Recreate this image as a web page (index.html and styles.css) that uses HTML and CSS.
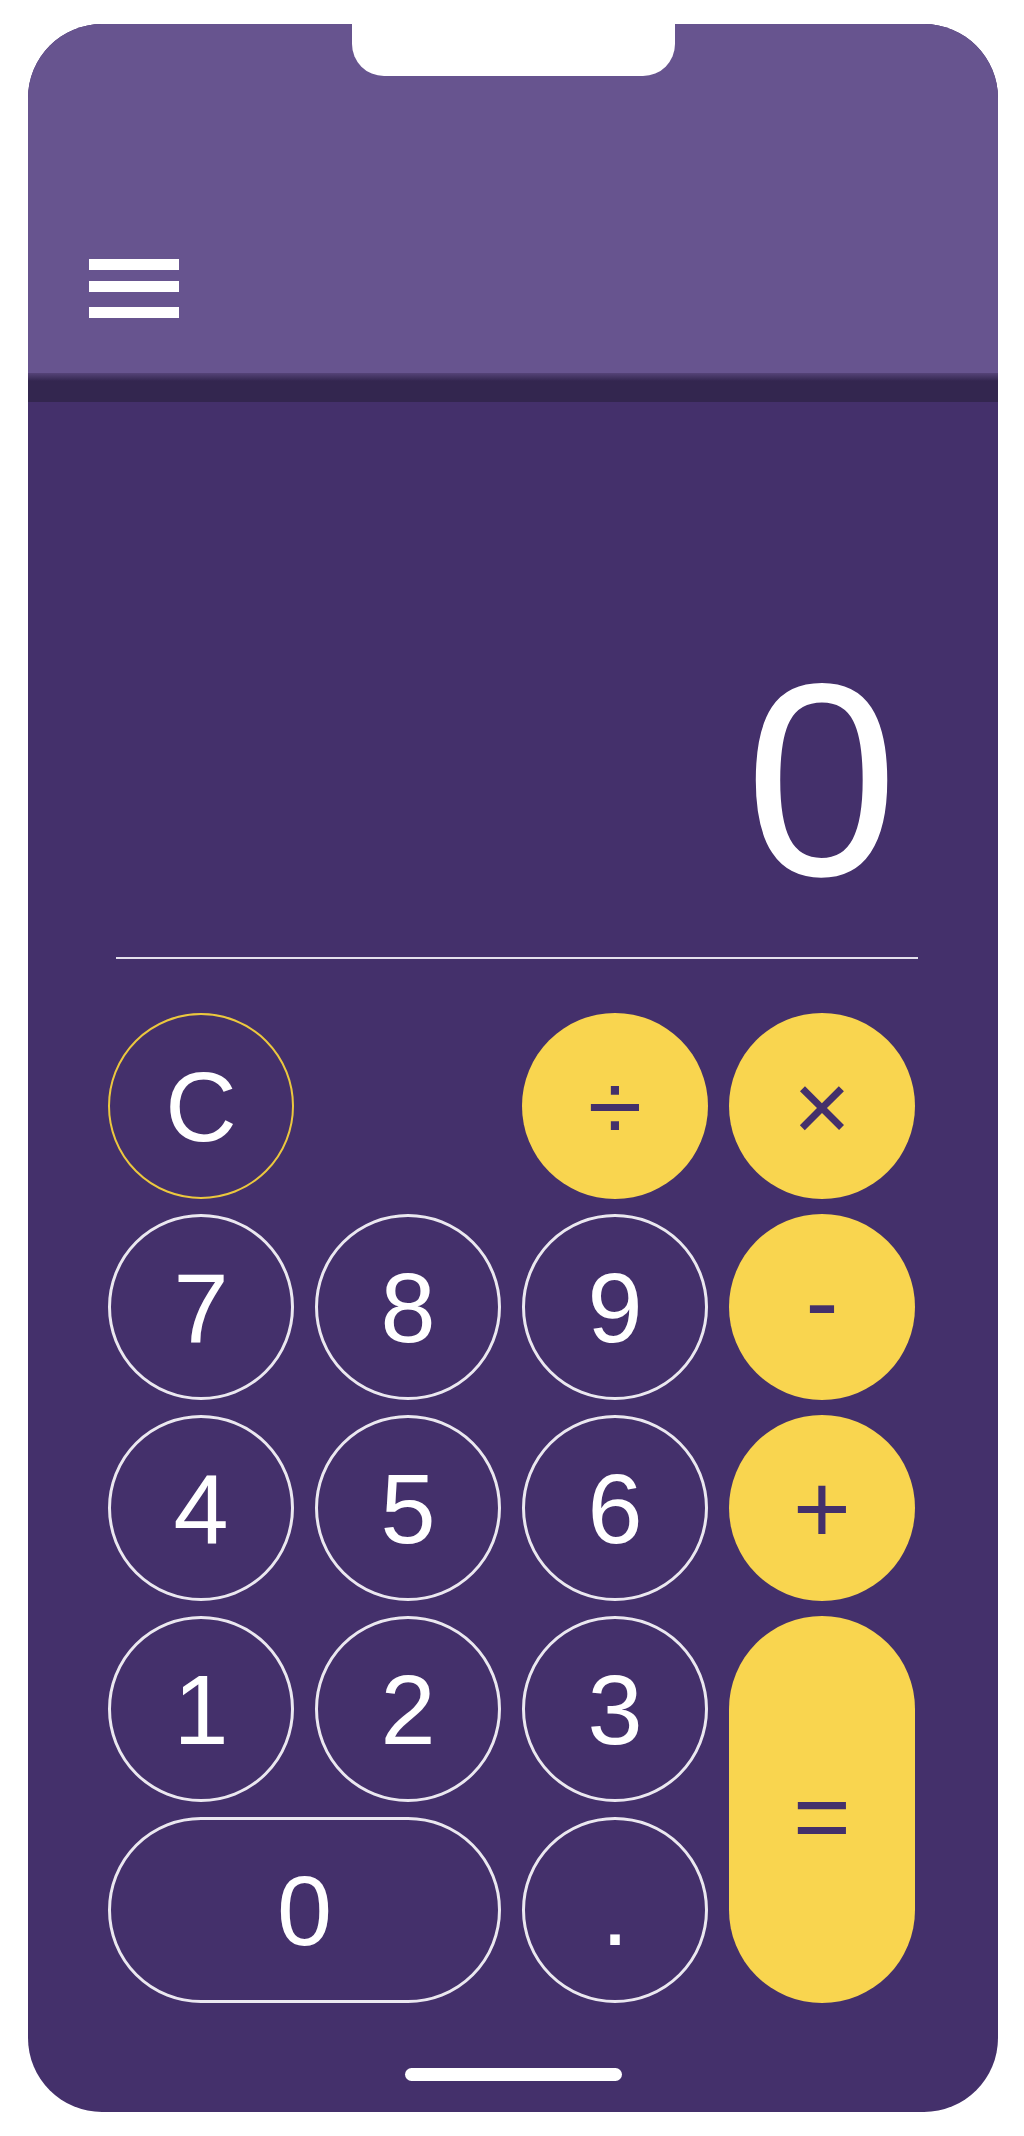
FILE: index.html
```html
<!DOCTYPE html>
<html lang="en">
<head>
<meta charset="utf-8">
<title>Calculator</title>
<link rel="stylesheet" href="styles.css">
</head>
<body>
<div class="phone">
  <header class="header">
    <div class="notch"></div>
    <div class="menu" aria-label="Menu">
      <span class="bar"></span>
      <span class="bar"></span>
      <span class="bar bar-last"></span>
    </div>
  </header>
  <div class="band"></div>
  <div class="display">0</div>
  <div class="divider"></div>
  <div class="keypad">
    <button class="key key-clear">C</button>
    <button class="key key-op key-div">÷</button>
    <button class="key key-op">×</button>
    <button class="key">7</button>
    <button class="key">8</button>
    <button class="key">9</button>
    <button class="key key-op key-minus">-</button>
    <button class="key">4</button>
    <button class="key">5</button>
    <button class="key">6</button>
    <button class="key key-op">+</button>
    <button class="key">1</button>
    <button class="key">2</button>
    <button class="key">3</button>
    <button class="key key-op key-eq">=</button>
    <button class="key key-zero">0</button>
    <button class="key">.</button>
  </div>
  <div class="home-indicator"></div>
</div>
</body>
</html>
```
FILE: styles.css
```css
* {
  box-sizing: border-box;
}

html, body {
  margin: 0;
  padding: 0;
  background: #ffffff;
}

body {
  font-family: "Liberation Sans", Arial, sans-serif;
  padding: 24px 0 0 28px;
}

.phone {
  width: 970px;
  height: 2088px;
  border-radius: 74px;
  overflow: hidden;
  background: #44306b;
  display: flex;
  flex-direction: column;
}

.header {
  height: 349px;
  background: #67548f;
  display: flex;
  flex-direction: column;
}

.notch {
  width: 323px;
  height: 52px;
  margin: 0 auto;
  background: #ffffff;
  border-radius: 0 0 32px 32px;
}

.menu {
  margin: 183px 0 0 61px;
  width: 90px;
  display: flex;
  flex-direction: column;
}

.bar {
  display: block;
  width: 90px;
  height: 11px;
  background: #ffffff;
  margin-bottom: 11px;
}

.bar-last {
  margin-top: 4px;
  margin-bottom: 0;
}

.band {
  height: 29px;
  background: linear-gradient(#554378 0, #33264f 8px, #33264f 100%);
}

.display {
  color: #ffffff;
  font-size: 275px;
  line-height: 275px;
  text-align: right;
  padding: 240px 100px 40px 0;
}

.divider {
  height: 2px;
  background: #e4e0ec;
  margin: 0 80px 0 88px;
}

.keypad {
  margin: 54px 0 0 80px;
  display: grid;
  grid-template-columns: repeat(4, 186px);
  grid-auto-rows: 186px;
  column-gap: 21px;
  row-gap: 15px;
}

.key {
  font-family: "Liberation Sans", Arial, sans-serif;
  font-size: 99px;
  color: #ffffff;
  background: transparent;
  border: 3px solid #ebe8f0;
  border-radius: 93px;
  padding: 0;
  margin: 0;
  display: flex;
  align-items: center;
  justify-content: center;
  line-height: 1;
}

.key-clear {
  border: 2.5px solid #ecc83e;
}

.key-div {
  grid-column: 3;
}

.key-op {
  background: #f9d54f;
  border: none;
  color: #44306b;
}

.key-minus {
  padding-bottom: 14px;
}

.key-eq {
  grid-row: span 2;
  padding-top: 14px;
}

.key-zero {
  grid-column: span 2;
}

.home-indicator {
  width: 217px;
  height: 13px;
  background: #ffffff;
  border-radius: 7px;
  margin: 65px auto 0;
}
```
